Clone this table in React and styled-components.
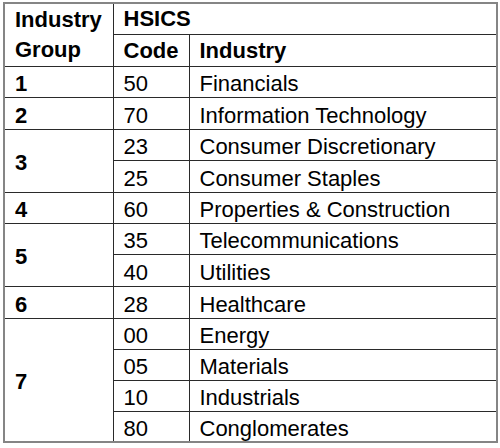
import styled, { createGlobalStyle } from 'styled-components';

const GlobalStyle = createGlobalStyle`
  body {
    margin: 0;
    background: #fff;
    font-family: "Liberation Sans", Arial, sans-serif;
    color: #000;
  }
`;

const Page = styled.div`
  padding: 2px 2px 0 3px;
`;

const Table = styled.table`
  width: 495px;
  border-collapse: collapse;
  border: 2px solid #858585;
  font-size: 22px;
  table-layout: fixed;
`;

const Row = styled.tr`
  height: ${(p) => p.$h}px;
`;

const Cell = styled.td`
  border: 1px solid #2a2a2a;
  padding: 5px 10px 0;
  line-height: 22px;
  font-weight: ${(p) => (p.$bold ? 700 : 400)};
  vertical-align: middle;
  white-space: nowrap;
`;

const HeadCell = styled(Cell).attrs({ as: 'th' })`
  text-align: left;
  font-weight: 700;
  padding-top: 1px;
`;

/* two text lines that sit on the two header rows */
const GroupHead = styled(HeadCell)`
  vertical-align: top;
  line-height: 30px;
  padding-top: 1px;
`;

const groups = [
  { id: '1', items: [['50', 'Financials']] },
  { id: '2', items: [['70', 'Information Technology']] },
  { id: '3', items: [['23', 'Consumer Discretionary'], ['25', 'Consumer Staples']] },
  { id: '4', items: [['60', 'Properties & Construction']] },
  { id: '5', items: [['35', 'Telecommunications'], ['40', 'Utilities']] },
  { id: '6', items: [['28', 'Healthcare']] },
  {
    id: '7',
    items: [['00', 'Energy'], ['05', 'Materials'], ['10', 'Industrials'], ['80', 'Conglomerates']],
  },
];

// whole-pixel row heights so lines land where the scan has them
const bodyHeights = [31, 32, 31, 32, 31, 31, 32, 32, 31, 31, 31, 31];

const rows = groups.flatMap((g) =>
  g.items.map(([code, name], i) => ({ group: g, code, name, first: i === 0 }))
);

const App = () => {
  return (
    <>
      <GlobalStyle />
      <Page>
        <Table>
          <colgroup>
            <col style={{ width: '109px' }} />
            <col style={{ width: '76px' }} />
            <col />
          </colgroup>
          <thead>
            <Row $h={31}>
              <GroupHead rowSpan={2}>
                Industry
                <br />
                Group
              </GroupHead>
              <HeadCell colSpan={2}>HSICS</HeadCell>
            </Row>
            <Row $h={32}>
              <HeadCell>Code</HeadCell>
              <HeadCell>Industry</HeadCell>
            </Row>
          </thead>
          <tbody>
            {rows.map((r, idx) => (
              <Row key={r.code} $h={bodyHeights[idx]}>
                {r.first && (
                  <Cell $bold rowSpan={r.group.items.length}>
                    {r.group.id}
                  </Cell>
                )}
                <Cell>{r.code}</Cell>
                <Cell>{r.name}</Cell>
              </Row>
            ))}
          </tbody>
        </Table>
      </Page>
    </>
  );
};

export default App;
